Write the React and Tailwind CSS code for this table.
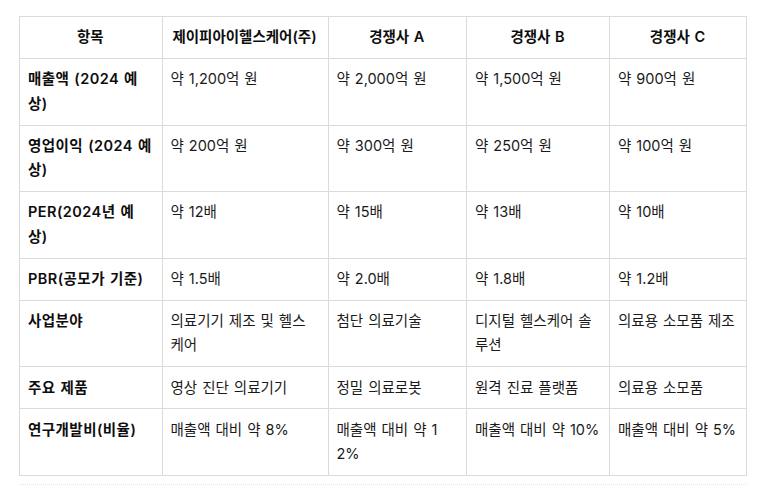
const headers = ["항목", "제이피아이헬스케어(주)", "경쟁사 A", "경쟁사 B", "경쟁사 C"]

const rows = [
  ["매출액 (2024 예상)", "약 1,200억 원", "약 2,000억 원", "약 1,500억 원", "약 900억 원"],
  ["영업이익 (2024 예상)", "약 200억 원", "약 300억 원", "약 250억 원", "약 100억 원"],
  ["PER(2024년 예상)", "약 12배", "약 15배", "약 13배", "약 10배"],
  ["PBR(공모가 기준)", "약 1.5배", "약 2.0배", "약 1.8배", "약 1.2배"],
  ["사업분야", "의료기기 제조 및 헬스케어", "첨단 의료기술", "디지털 헬스케어 솔루션", "의료용 소모품 제조"],
  ["주요 제품", "영상 진단 의료기기", "정밀 의료로봇", "원격 진료 플랫폼", "의료용 소모품"],
  ["연구개발비(비율)", "매출액 대비 약 8%", "매출액 대비 약 12%", "매출액 대비 약 10%", "매출액 대비 약 5%"],
]

const App = () => {
  return (
    <div className="min-h-screen bg-white pl-[19px] pt-[16px] font-[Inter,'Noto_Sans_CJK_KR',sans-serif] text-[14.5px] text-[#0d0d0d] [word-spacing:0.9px]">
      <table className="w-[727px] table-fixed border-collapse">
        <colgroup>
          <col className="w-[142.5px]" />
          <col className="w-[166px]" />
          <col className="w-[138.5px]" />
          <col className="w-[143px]" />
          <col className="w-[137px]" />
        </colgroup>
        <thead>
          <tr>
            {headers.map((h) => (
              <th
                key={h}
                className="border border-[#dadada] py-[8.35px] pl-[8px] pr-[9px] text-center font-semibold leading-[24.4px]"
              >
                {h}
              </th>
            ))}
          </tr>
        </thead>
        <tbody>
          {rows.map((row, i) => (
            <tr key={i}>
              {row.map((cell, j) => (
                <td
                  key={j}
                  className={
                    j === 0
                      ? "border border-[#dadada] py-[8.35px] pl-[8px] pr-[9px] text-left align-top font-semibold leading-[24.4px] tracking-[0.45px] break-all"
                      : "border border-[#dadada] py-[8.35px] pl-[8px] pr-[9px] text-left align-top font-normal leading-[24.4px] text-[#1a1a1a] break-all"
                  }
                >
                  {cell}
                </td>
              ))}
            </tr>
          ))}
        </tbody>
      </table>
      {/* dotted separator under the table */}
      <div className="mt-[8.5px] w-[727px] border-t border-dotted border-[#e3e3e3]" />
    </div>
  )
}

export default App
